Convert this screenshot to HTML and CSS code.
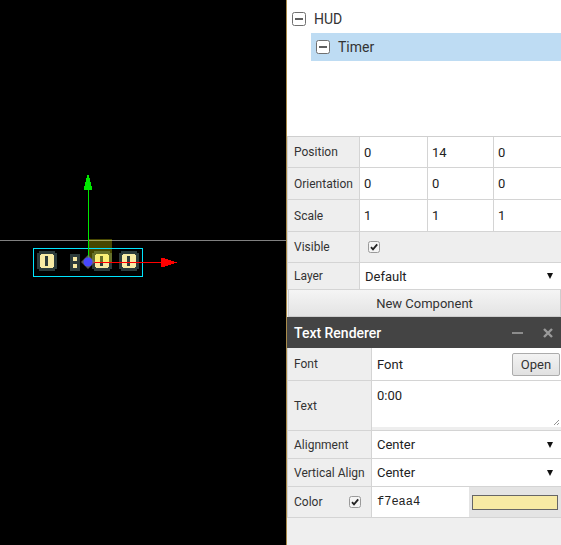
FILE: index.html
```html
<!DOCTYPE html>
<html>
<head>
<meta charset="utf-8">
<link rel="stylesheet" href="styles.css">
</head>
<body>
<div class="app">
  <div class="viewport">
    <svg class="scene" width="286" height="545" viewBox="0 0 286 545">
      <rect x="0" y="0" width="286" height="545" fill="#000"/>
      <line x1="0" y1="240.5" x2="286" y2="240.5" stroke="#808080" stroke-width="1"/>
      <g shape-rendering="crispEdges">
        <g transform="translate(37,251)">
          <path d="M2 0H18V2H20V18H18V20H2V18H0V2H2Z" fill="#2c3b3b"/>
          <path d="M4 3H16V4H17V16H16V17H4V16H3V4H4Z" fill="#f7eaa4"/>
          <rect x="8" y="5" width="3" height="10" fill="#2c3b3b"/>
        </g>
        <g transform="translate(70,254)">
          <rect x="0" y="0" width="10" height="17" fill="#2c3b3b"/>
          <rect x="3" y="3" width="4" height="4" fill="#f7eaa4"/>
          <rect x="3" y="10" width="4" height="4" fill="#f7eaa4"/>
        </g>
        <g transform="translate(92,251)">
          <path d="M2 0H18V2H20V18H18V20H2V18H0V2H2Z" fill="#2c3b3b"/>
          <path d="M4 3H16V4H17V16H16V17H4V16H3V4H4Z" fill="#f7eaa4"/>
          <rect x="8" y="5" width="3" height="10" fill="#2c3b3b"/>
        </g>
        <g transform="translate(119,251)">
          <path d="M2 0H18V2H20V18H18V20H2V18H0V2H2Z" fill="#2c3b3b"/>
          <path d="M4 3H16V4H17V16H16V17H4V16H3V4H4Z" fill="#f7eaa4"/>
          <rect x="8" y="5" width="3" height="10" fill="#2c3b3b"/>
        </g>
        <rect x="88" y="239" width="24" height="23" fill="rgba(255,255,0,0.28)"/>
        <rect x="33.5" y="248.5" width="109" height="28" fill="none" stroke="#00e5ff" stroke-width="1.2"/>
        <line x1="88.5" y1="188" x2="88.5" y2="262" stroke="#00e600" stroke-width="1"/>
        <path d="M88 175H89V178H90V182H91V186H92V190H84V186H85V182H86V178H87V175Z" fill="#00e600"/>
        <line x1="88" y1="262.5" x2="177" y2="262.5" stroke="#ff0000" stroke-width="1"/>
        <path d="M161 258H165V259H168V260H171V261H174V264H171V265H168V266H165V267H161Z" fill="#ff0000"/>
      </g>
      <path d="M88 255L95 262L88 269L81 262Z" fill="rgba(120,120,120,0.7)"/>
      <circle cx="88" cy="262" r="4.5" fill="#4646ff"/>
    </svg>
  </div>
  <div class="panel">
    <div class="tree">
      <div class="node">
        <svg class="toggle" width="14" height="14" viewBox="0 0 14 14"><rect x="0.5" y="0.5" width="13" height="13" rx="2" fill="#fff" stroke="#707070"/><rect x="3" y="6" width="8" height="2" fill="#606060"/></svg>
        <span class="node-label">HUD</span>
      </div>
      <div class="node child selected">
        <svg class="toggle" width="14" height="14" viewBox="0 0 14 14"><rect x="0.5" y="0.5" width="13" height="13" rx="2" fill="#fff" stroke="#707070"/><rect x="3" y="6" width="8" height="2" fill="#606060"/></svg>
        <span class="node-label">Timer</span>
      </div>
    </div>

    <div class="props transform">
      <div class="lbl">Position</div>
      <div class="val">0</div>
      <div class="val">14</div>
      <div class="val">0</div>

      <div class="lbl">Orientation</div>
      <div class="val">0</div>
      <div class="val">0</div>
      <div class="val">0</div>

      <div class="lbl">Scale</div>
      <div class="val">1</div>
      <div class="val">1</div>
      <div class="val">1</div>

      <div class="lbl">Visible</div>
      <div class="val span3 plain">
        <svg class="check" width="12" height="12" viewBox="0 0 12 12"><rect x="0.5" y="0.5" width="11" height="11" rx="2" fill="#f4f4f4" stroke="#9a9a9a"/><path d="M3 6.2L5 8.4L9.2 3.4" fill="none" stroke="#222" stroke-width="1.8"/></svg>
      </div>

      <div class="lbl">Layer</div>
      <div class="val span3 select">Default<span class="caret"></span></div>
    </div>

    <button class="new-comp">New Component</button>

    <div class="comp-header">
      <span class="comp-title">Text Renderer</span>
      <span class="comp-tools">
        <svg width="12" height="4" viewBox="0 0 12 4"><rect x="0" y="1" width="11" height="2" fill="#8c8c8c"/></svg>
        <svg width="10" height="10" viewBox="0 0 10 10"><path d="M1 1L9 9M9 1L1 9" stroke="#9a9a9a" stroke-width="2.4"/></svg>
      </span>
    </div>

    <div class="props comp">
      <div class="lbl">Font</div>
      <div class="val fontcell">
        <span class="font-input">Font</span>
        <button class="open-btn">Open</button>
      </div>

      <div class="lbl">Text</div>
      <div class="val textcell">
        <div class="textarea">0:00
          <svg class="grip" width="6" height="6" viewBox="0 0 6 6"><path d="M6 1L1 6M6 4L4 6" stroke="#888" stroke-width="0.9"/></svg>
        </div>
      </div>

      <div class="lbl">Alignment</div>
      <div class="val select">Center<span class="caret"></span></div>

      <div class="lbl">Vertical Align</div>
      <div class="val select">Center<span class="caret"></span></div>

      <div class="lbl colorlbl">Color
        <svg class="check" width="12" height="12" viewBox="0 0 12 12"><rect x="0.5" y="0.5" width="11" height="11" rx="2" fill="#f4f4f4" stroke="#9a9a9a"/><path d="M3 6.2L5 8.4L9.2 3.4" fill="none" stroke="#222" stroke-width="1.8"/></svg>
      </div>
      <div class="val colorcell">
        <span class="hex">f7eaa4</span>
        <span class="swatch-wrap"><span class="swatch"></span></span>
      </div>
    </div>
  </div>
</div>
</body>
</html>
```

FILE: styles.css
```css
* { box-sizing: border-box; }
html, body {
  margin: 0;
  padding: 0;
  width: 561px;
  height: 545px;
  overflow: hidden;
  background: #000;
}
.app {
  display: flex;
  width: 561px;
  height: 545px;
  font-family: Roboto, "Liberation Sans", sans-serif;
}
.viewport {
  flex: none;
  width: 287px;
  height: 545px;
  border-right: 1px solid #a98b4a;
}
.scene { display: block; }
.panel {
  width: 274px;
  height: 545px;
  background: #efefef;
  display: flex;
  flex-direction: column;
}
.tree {
  background: #fff;
  height: 137px;
  padding-top: 5px;
  border-bottom: 1px solid #cfcfcf;
  flex: none;
}
.node {
  height: 28px;
  display: flex;
  align-items: center;
  padding-left: 5px;
  gap: 8px;
}
.node.child {
  margin-left: 24px;
}
.node.selected {
  background: #bedcf3;
}
.toggle { display: block; flex: none; }
.node-label {
  font-size: 14px;
  color: #333;
}
.props {
  display: grid;
  gap: 1px;
  background: #d4d4d4;
  padding: 0 0 1px 1px;
  flex: none;
}
.transform {
  grid-template-columns: 71px 67px 65px 67px;
  grid-template-rows: 30px 31px 31px 30px 26px;
}
.comp {
  grid-template-columns: 83px 189px;
  grid-template-rows: 32px 49px 27px 27px 30px;
}
.lbl {
  background: #eeeeee;
  font-size: 12px;
  color: #333;
  display: flex;
  align-items: center;
  padding-left: 6px;
  white-space: nowrap;
}
.val {
  background: #fff;
  font-size: 13px;
  color: #222;
  display: flex;
  align-items: center;
  padding-left: 4px;
}
.span3 { grid-column: span 3; }
.val.plain {
  background: #eeeeee;
  padding-left: 8px;
}
.check { display: block; }
.val.select {
  position: relative;
  padding-left: 5px;
}
.caret {
  position: absolute;
  right: 8px;
  top: 50%;
  margin-top: -3px;
  width: 0;
  height: 0;
  border-left: 3.5px solid transparent;
  border-right: 3.5px solid transparent;
  border-top: 6px solid #111;
}
.new-comp {
  flex: none;
  height: 27px;
  margin: 0 0 0 1px;
  border: 1px solid #cdcdcd;
  border-top: 0;
  background: linear-gradient(#f5f5f5, #e3e3e3);
  font-family: Roboto, "Liberation Sans", sans-serif;
  font-size: 13px;
  color: #333;
  padding: 0;
}
.comp-header {
  flex: none;
  height: 31px;
  background: #444;
  display: flex;
  align-items: center;
  justify-content: space-between;
  padding: 0 8px 0 7px;
}
.comp-title {
  color: #fff;
  font-size: 14px;
  font-weight: 500;
}
.comp-tools {
  display: flex;
  align-items: center;
  gap: 19px;
}
.comp-tools svg { display: block; }
.val.fontcell {
  padding: 0;
  justify-content: space-between;
  align-items: stretch;
}
.font-input {
  flex: 1;
  display: flex;
  align-items: center;
  padding-left: 5px;
  font-size: 13px;
}
.open-btn {
  align-self: center;
  width: 48px;
  height: 23px;
  margin-right: 1px;
  border: 1px solid #acacac;
  border-radius: 2px;
  background: linear-gradient(#f3f3f3, #e1e1e1);
  font-family: Roboto, "Liberation Sans", sans-serif;
  font-size: 13px;
  color: #333;
  padding: 0;
}
.val.textcell {
  background: #eeeeee;
  padding: 0;
  align-items: flex-start;
}
.textarea {
  position: relative;
  width: 100%;
  height: 46px;
  background: #fff;
  padding: 7px 5px;
  font-size: 13px;
  line-height: 16px;
  color: #222;
}
.grip {
  position: absolute;
  right: 2px;
  bottom: 2px;
}
.colorlbl {
  justify-content: space-between;
  padding-right: 10px;
}
.val.colorcell {
  padding: 0;
  align-items: stretch;
}
.hex {
  width: 97px;
  display: flex;
  align-items: center;
  padding-left: 5px;
  font-family: "Liberation Mono", "DejaVu Sans Mono", monospace;
  font-size: 12px;
  color: #222;
}
.swatch-wrap {
  flex: 1;
  background: #e4e4e4;
  display: flex;
  align-items: center;
  padding: 0 3px;
}
.swatch {
  display: block;
  width: 100%;
  height: 15px;
  background: #f7eaa4;
  border: 1px solid #666;
}
```
